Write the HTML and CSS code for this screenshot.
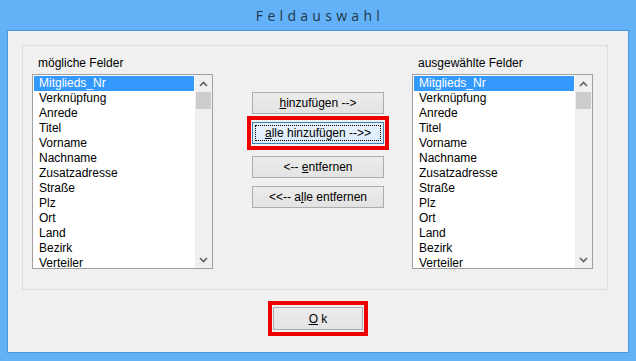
FILE: index.html
```html
<!DOCTYPE html>
<html lang="de">
<head>
<meta charset="utf-8">
<title>Feldauswahl</title>
<link rel="stylesheet" href="styles.css">
</head>
<body>
<div class="window">
  <div class="titlebar">Feldauswahl</div>
  <div class="client">
    <div class="group">
      <div class="list-col">
        <div class="label">mögliche Felder</div>
        <div class="listbox">
          <div class="items">
            <div class="item sel">Mitglieds_Nr</div>
            <div class="item">Verknüpfung</div>
            <div class="item">Anrede</div>
            <div class="item">Titel</div>
            <div class="item">Vorname</div>
            <div class="item">Nachname</div>
            <div class="item">Zusatzadresse</div>
            <div class="item">Straße</div>
            <div class="item">Plz</div>
            <div class="item">Ort</div>
            <div class="item">Land</div>
            <div class="item">Bezirk</div>
            <div class="item">Verteiler</div>
          </div>
          <div class="scrollbar">
            <div class="arrow"><svg width="9" height="6" viewBox="0 0 9 6"><path d="M1 5 L4.5 1.5 L8 5" fill="none" stroke="#606060" stroke-width="1.6"/></svg></div>
            <div class="thumb"></div>
            <div class="track"></div>
            <div class="arrow"><svg width="9" height="6" viewBox="0 0 9 6"><path d="M1 1 L4.5 4.5 L8 1" fill="none" stroke="#606060" stroke-width="1.6"/></svg></div>
          </div>
        </div>
      </div>
      <div class="btn-col">
        <button class="btn"><span><u>h</u>inzufügen --&gt;</span></button>
        <button class="btn focus marked"><span class="focus-rect"><span><u>a</u>lle hinzufügen --&gt;&gt;</span></span></button>
        <button class="btn gap-lg"><span>&lt;-- <u>e</u>ntfernen</span></button>
        <button class="btn"><span>&lt;&lt;-- a<u>l</u>le entfernen</span></button>
      </div>
      <div class="list-col right">
        <div class="label">ausgewählte Felder</div>
        <div class="listbox">
          <div class="items">
            <div class="item sel">Mitglieds_Nr</div>
            <div class="item">Verknüpfung</div>
            <div class="item">Anrede</div>
            <div class="item">Titel</div>
            <div class="item">Vorname</div>
            <div class="item">Nachname</div>
            <div class="item">Zusatzadresse</div>
            <div class="item">Straße</div>
            <div class="item">Plz</div>
            <div class="item">Ort</div>
            <div class="item">Land</div>
            <div class="item">Bezirk</div>
            <div class="item">Verteiler</div>
          </div>
          <div class="scrollbar">
            <div class="arrow"><svg width="9" height="6" viewBox="0 0 9 6"><path d="M1 5 L4.5 1.5 L8 5" fill="none" stroke="#606060" stroke-width="1.6"/></svg></div>
            <div class="thumb"></div>
            <div class="track"></div>
            <div class="arrow"><svg width="9" height="6" viewBox="0 0 9 6"><path d="M1 1 L4.5 4.5 L8 1" fill="none" stroke="#606060" stroke-width="1.6"/></svg></div>
          </div>
        </div>
      </div>
    </div>
    <div class="footer">
      <button class="btn ok marked"><span><u>O</u> k</span></button>
    </div>
  </div>
</div>
</body>
</html>
```

FILE: styles.css
```css
* { box-sizing: border-box; }
html, body {
  margin: 0;
  padding: 0;
}
body {
  width: 636px;
  height: 361px;
  background: #63b2f7;
  font-family: "Liberation Sans", Arial, sans-serif;
  font-size: 12px;
  color: #000;
  overflow: hidden;
}
.window {
  width: 636px;
  height: 361px;
  display: flex;
  flex-direction: column;
}
.titlebar {
  height: 30px;
  flex: none;
  display: flex;
  align-items: center;
  justify-content: center;
  font-family: "Open Sans", "DejaVu Sans", sans-serif;
  font-size: 14px;
  letter-spacing: 4.3px;
  padding-left: 4px;
  color: #22374b;
}
.client {
  margin: 0 7px 8px 7px;
  height: 323px;
  border: 1px solid #4d95d9;
  background: #f0f0f0;
  display: flex;
  flex-direction: column;
}
.group {
  margin: 14px 20px 0 14px;
  height: 245px;
  border: 1px solid #dcdcdc;
  padding-left: 9px;
  display: flex;
}
.list-col {
  width: 181px;
  flex: none;
}
.list-col.right {
  margin-left: 28px;
}
.label {
  height: 15px;
  line-height: 15px;
  margin: 10px 0 3px 6px;
  white-space: nowrap;
}
.listbox {
  height: 195px;
  border: 1px solid #a0a0a0;
  background: #fff;
  display: flex;
}
.items {
  width: 162px;
  padding: 1px;
  overflow: hidden;
}
.item {
  height: 15px;
  line-height: 15px;
  padding-left: 5px;
  white-space: nowrap;
}
.item.sel {
  background: #3399ff;
  color: #fff;
}
.scrollbar {
  width: 17px;
  background: #f0f0f0;
  display: flex;
  flex-direction: column;
}
.arrow {
  height: 17px;
  flex: none;
  display: flex;
  align-items: center;
  justify-content: center;
}
.thumb {
  height: 17px;
  margin: 0 1px;
  flex: none;
  background: #cdcdcd;
}
.track { flex: 1; }

.btn-col {
  width: 132px;
  margin-left: 39px;
  padding-top: 46px;
  display: flex;
  flex-direction: column;
  gap: 8px;
  flex: none;
}
.btn {
  position: relative;
  height: 22px;
  width: 132px;
  padding: 0;
  margin: 0;
  border: 1px solid #adadad;
  background: linear-gradient(#ececec, #e3e3e3);
  font-family: "Liberation Sans", Arial, sans-serif;
  font-size: 12px;
  color: #000;
  display: flex;
  align-items: center;
  justify-content: center;
  white-space: pre;
}
.btn.gap-lg { margin-top: 4px; }
.btn.focus {
  border-color: #3c7fb1;
  background: linear-gradient(#eaf3fb, #dcecfc);
}
.focus-rect {
  position: absolute;
  inset: 2px;
  border: 1px dotted #000;
  display: flex;
  align-items: center;
  justify-content: center;
}
.btn u { text-underline-offset: 1px; }
.marked::after {
  content: "";
  position: absolute;
  left: -6px;
  right: -6px;
  top: -7px;
  bottom: -7px;
  border: 4px solid #ee0000;
}
.footer {
  display: flex;
  justify-content: center;
  padding-top: 17px;
}
.btn.ok {
  width: 90px;
  height: 23px;
}
```
